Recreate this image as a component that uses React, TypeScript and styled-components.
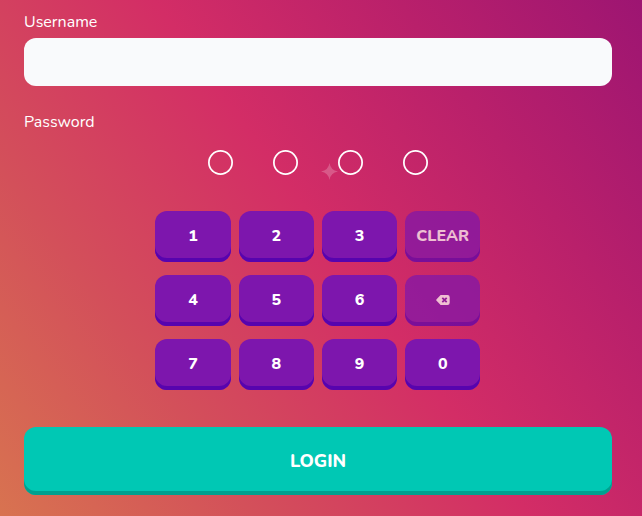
import React from "react";
import styled, { createGlobalStyle } from "styled-components";

const GlobalStyle = createGlobalStyle`
  *, *::before, *::after { box-sizing: border-box; }
  body { margin: 0; overflow: hidden; }
  button, input { font: inherit; border: 0; padding: 0; margin: 0; }
`;

const Page = styled.main`
  width: 642px;
  height: 516px;
  padding: 12px 30px 0 24px;
  color: #fff;
  font-family: Nunito, "Noto Sans", sans-serif;
  background: linear-gradient(54deg, #d87350 0%, #d3505a 25%, #d32d66 52%, #b9206b 76%, #9d1572 100%);
`;

const Form = styled.form`
  display: flex;
  flex-direction: column;
`;

const Label = styled.label`
  height: 20px;
  line-height: 20px;
  font-size: 16px;
  font-weight: 400;
  color: #fff;
`;

const TextInput = styled.input`
  height: 48px;
  margin: 6px 0 26px;
  border-radius: 12px;
  background: #f9fafc;
  outline: none;
`;

const PinRow = styled.div`
  position: relative;
  display: flex;
  justify-content: center;
  gap: 40px;
  margin-top: 18px;
`;

const PinDot = styled.span`
  width: 25px;
  height: 25px;
  border-radius: 50%;
  box-shadow: inset 0 0 0 1.75px #fff;
`;

const Sparkle = styled.svg`
  position: absolute;
  left: 297px;
  top: 13px;
  width: 17px;
  height: 17px;
  fill: rgba(255, 255, 255, 0.22);
`;

const Keypad = styled.div`
  display: grid;
  grid-template-columns: repeat(4, 1fr);
  gap: 13px 8px;
  width: 325px;
  margin: 36px 0 0 131.4px;
`;

const Key = styled.button<{ $muted?: boolean }>`
  display: flex;
  align-items: center;
  justify-content: center;
  height: 51px;
  padding-bottom: 2px;
  border-radius: 12px;
  background: #7d16ad;
  box-shadow: inset 0 -4px 0 #5704ae;
  color: #fff;
  font-size: 16px;
  font-weight: 800;
  opacity: ${(p) => (p.$muted ? 0.7 : 1)};
`;

const LoginButton = styled.button`
  height: 68px;
  margin-top: 37px;
  padding-bottom: 1px;
  border-radius: 12px;
  background: #00c8b4;
  box-shadow: inset 0 -4px 0 #00a08f;
  color: #fff;
  font-size: 18px;
  font-weight: 800;
`;

function BackspaceIcon() {
  return (
    <svg width="14" height="10" viewBox="0 0 14 10" aria-label="Backspace">
      <path d="M4.6 0h6.9a2.2 2.2 0 0 1 2.2 2.2v5.6a2.2 2.2 0 0 1-2.2 2.2H4.6L.6 5.8a1.1 1.1 0 0 1 0-1.6z" fill="#fff" />
      <path d="m6.3 2.8 4.4 4.4m0-4.4L6.3 7.2" stroke="#7d16ad" strokeWidth="1.8" />
    </svg>
  );
}

const keys = ["1", "2", "3", "clear", "4", "5", "6", "backspace", "7", "8", "9", "0"];

function KeyContent({ name }: { name: string }) {
  if (name === "clear") return <>CLEAR</>;
  if (name === "backspace") return <BackspaceIcon />;
  return <>{name}</>;
}

export default function App() {
  return (
    <>
      <GlobalStyle />
      <Page>
        <Form onSubmit={(e) => e.preventDefault()}>
          <Label htmlFor="username">Username</Label>
          <TextInput id="username" />
          <Label as="span">Password</Label>
          <PinRow>
            {[0, 1, 2, 3].map((i) => <PinDot key={i} />)}
            <Sparkle viewBox="0 0 18 18">
              <path d="M9 0Q10.2 7.8 18 9 10.2 10.2 9 18 7.8 10.2 0 9 7.8 7.8 9 0Z" />
            </Sparkle>
          </PinRow>
          <Keypad>
            {keys.map((name) => (
              <Key key={name} type="button" $muted={name === "clear" || name === "backspace"}>
                <KeyContent name={name} />
              </Key>
            ))}
          </Keypad>
          <LoginButton type="submit">LOGIN</LoginButton>
        </Form>
      </Page>
    </>
  );
}
